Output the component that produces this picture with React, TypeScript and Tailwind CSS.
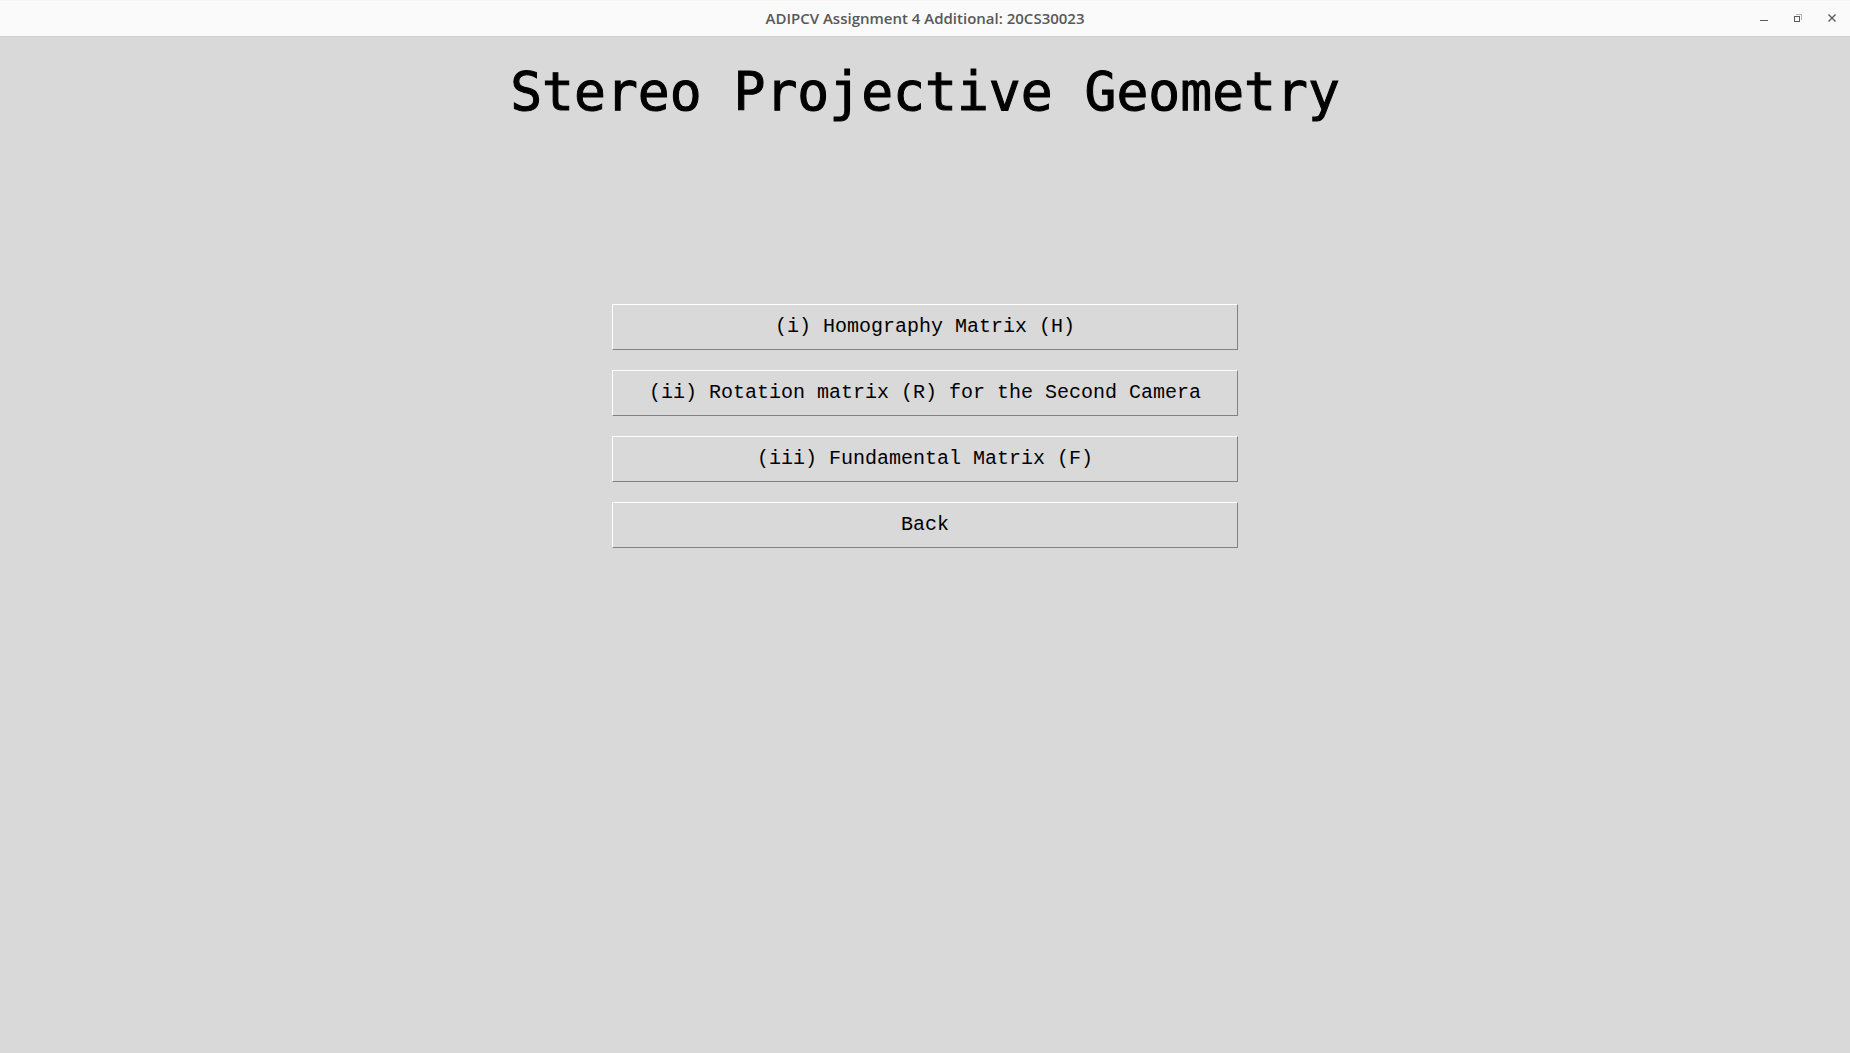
const actions = [
  '(i) Homography Matrix (H)',
  '(ii) Rotation matrix (R) for the Second Camera',
  '(iii) Fundamental Matrix (F)',
  'Back',
];

function TitleBar() {
  return (
    <header className="grid h-[37px] grid-cols-[1fr_auto_1fr] items-center border-b border-b-[#cfcfcf] bg-[#fafafa] shadow-[inset_0_1px_0_#f5f5f5]">
      <span />
      <span className="font-['Open_Sans',sans-serif] text-[15px] leading-5 font-semibold text-[#585858]">
        ADIPCV Assignment 4 Additional: 20CS30023
      </span>
      <div className="flex items-center justify-end gap-[10px] pr-1.5 text-[#5c5c5c]">
        <button type="button" aria-label="Minimize" className="flex size-6 items-center justify-center">
          <svg width="16" height="16" viewBox="0 0 16 16" shapeRendering="crispEdges" aria-hidden="true">
            <path d="M4 10h8v1H4z" fill="currentColor" />
          </svg>
        </button>
        <button type="button" aria-label="Restore" className="flex size-6 items-center justify-center">
          <svg width="16" height="16" viewBox="0 0 16 16" shapeRendering="crispEdges" aria-hidden="true">
            <path d="M4.5 6.5h5v5h-5z" fill="none" stroke="currentColor" />
            <path d="M6 4.5h5.5V10" fill="none" stroke="#b4b4b4" />
          </svg>
        </button>
        <button type="button" aria-label="Close" className="flex size-6 items-center justify-center">
          <svg width="16" height="16" viewBox="0 0 16 16" aria-hidden="true">
            <path d="M4.5 4.5l7 7M11.5 4.5l-7 7" fill="none" stroke="currentColor" strokeWidth="1.4" />
          </svg>
        </button>
      </div>
    </header>
  );
}

export default function App() {
  return (
    <div className="flex min-h-screen flex-col bg-[#d9d9d9] text-black">
      <TitleBar />
      <main className="flex flex-col items-center">
        <h1 className="mt-[23px] font-['DejaVu_Sans_Mono',monospace] text-[53px] leading-[64px] font-normal whitespace-pre [-webkit-text-stroke:1px_black]">
          Stereo Projective Geometry
        </h1>
        <div className="mt-[180px] flex w-[626px] max-w-full flex-col gap-5">
          {actions.map((label) => (
            <button
              key={label}
              type="button"
              className="h-[46px] border border-t-white border-r-[#828282] border-b-[#828282] border-l-white font-['Liberation_Mono',monospace] text-[20px] leading-6"
            >
              {label}
            </button>
          ))}
        </div>
      </main>
    </div>
  );
}
